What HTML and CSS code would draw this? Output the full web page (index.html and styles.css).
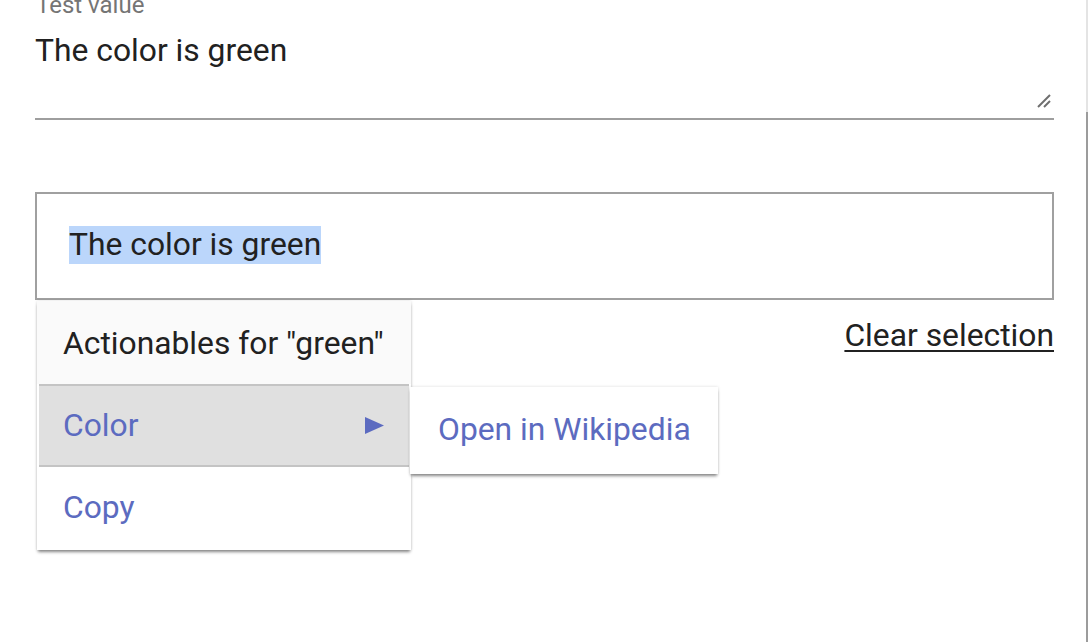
FILE: index.html
```html
<!DOCTYPE html>
<html>
<head>
<meta charset="utf-8">
<link rel="stylesheet" href="styles.css">
</head>
<body>
<div class="page">
  <div class="field">
    <div class="field-label">Test value</div>
    <div class="field-input">
      <div class="field-text">The color is green</div>
      <svg class="resize" width="16" height="16" viewBox="0 0 16 16">
        <line x1="2" y1="14" x2="14" y2="2" stroke="#6e6e6e" stroke-width="2"/>
        <line x1="8" y1="14" x2="14" y2="8" stroke="#6e6e6e" stroke-width="2"/>
      </svg>
    </div>
  </div>

  <div class="output-box">
    <span class="selected">The color is green</span>
  </div>

  <div class="below">
    <div class="menu">
      <div class="menu-header">Actionables for "green"</div>
      <div class="menu-item active">
        <span>Color</span>
        <svg class="arrow" width="19" height="17" viewBox="0 0 19 17"><polygon points="0,0 19,8.5 0,17" fill="#5c6bc0"/></svg>
      </div>
      <div class="menu-item">Copy</div>
      <div class="submenu">
        <div class="submenu-item">Open in Wikipedia</div>
      </div>
    </div>
    <div class="actions">
      <a class="clear-link" href="#">Clear selection</a>
    </div>
  </div>
</div>
<div class="scrollbar">
  <div class="scroll-track"></div>
  <div class="scroll-thumb"></div>
</div>
</body>
</html>
```

FILE: styles.css
```css
html, body {
  margin: 0;
  padding: 0;
  height: 100%;
  overflow: hidden;
  background: #ffffff;
}

body {
  display: flex;
  font-family: Roboto, "Noto Sans", sans-serif;
  color: #212121;
}

.page {
  flex: 1;
  padding: 0 32px 0 35px;
  min-width: 0;
}

.field {
  margin-top: -9px;
}

.field-label {
  font-size: 24px;
  line-height: 28px;
  color: #757575;
  padding-left: 1px;
  white-space: nowrap;
}

.field-input {
  box-sizing: border-box;
  height: 101px;
  padding-top: 13px;
  border-bottom: 2px solid #9e9e9e;
  display: flex;
  flex-direction: column;
}

.field-text {
  font-size: 31.8px;
  line-height: 37.5px;
}

.resize {
  display: block;
  align-self: flex-end;
  margin-top: auto;
  margin-right: 2px;
  margin-bottom: 9px;
}

.output-box {
  margin-top: 72px;
  box-sizing: border-box;
  height: 108px;
  border: 2px solid #a0a0a0;
  padding: 0 32px;
  display: flex;
  align-items: center;
  font-size: 31.8px;
}

.selected {
  background: #bbd6fb;
  line-height: 37.5px;
  margin-top: -2px;
}

.below {
  position: relative;
}

.actions {
  display: flex;
  justify-content: flex-end;
  padding-top: 17px;
}

.clear-link {
  font-size: 31.8px;
  line-height: 37.5px;
  color: #212121;
  text-decoration: underline;
  text-decoration-thickness: 2px;
  text-underline-offset: 4px;
}

.menu {
  position: absolute;
  top: 1px;
  left: 2px;
  width: 374px;
  background: #ffffff;
  box-shadow: 0 3px 3px -1px rgba(0, 0, 0, 0.45), 0 0 3px rgba(0, 0, 0, 0.14);
  z-index: 2;
  font-size: 31.8px;
}

.menu-header {
  height: 83px;
  display: flex;
  align-items: center;
  padding: 0 26px;
  background: #fafafa;
  color: #212121;
  white-space: nowrap;
}

.menu-item {
  box-sizing: border-box;
  height: 83px;
  display: flex;
  align-items: center;
  justify-content: space-between;
  padding: 0 26px 3px;
  color: #5c6bc0;
}

.menu-item.active {
  margin: 0 2px;
  padding: 0 25px 1px 24px;
  background: #e0e0e0;
  border-top: 2px solid #c4c4c4;
  border-bottom: 2px solid #c4c4c4;
}

.arrow {
  display: block;
}

.submenu {
  position: absolute;
  left: 373px;
  top: 86px;
  width: 308px;
  background: #ffffff;
  box-shadow: 0 3px 3px -1px rgba(0, 0, 0, 0.45), 0 0 3px rgba(0, 0, 0, 0.14);
}

.submenu-item {
  box-sizing: border-box;
  height: 87px;
  display: flex;
  align-items: center;
  padding: 0 28px 3px;
  color: #5c6bc0;
  white-space: nowrap;
}

.scrollbar {
  width: 2px;
  display: flex;
  flex-direction: column;
}

.scroll-track {
  height: 112px;
  background: #e4e4e4;
}

.scroll-thumb {
  flex: 1;
  background: #9c9c9c;
}
```
